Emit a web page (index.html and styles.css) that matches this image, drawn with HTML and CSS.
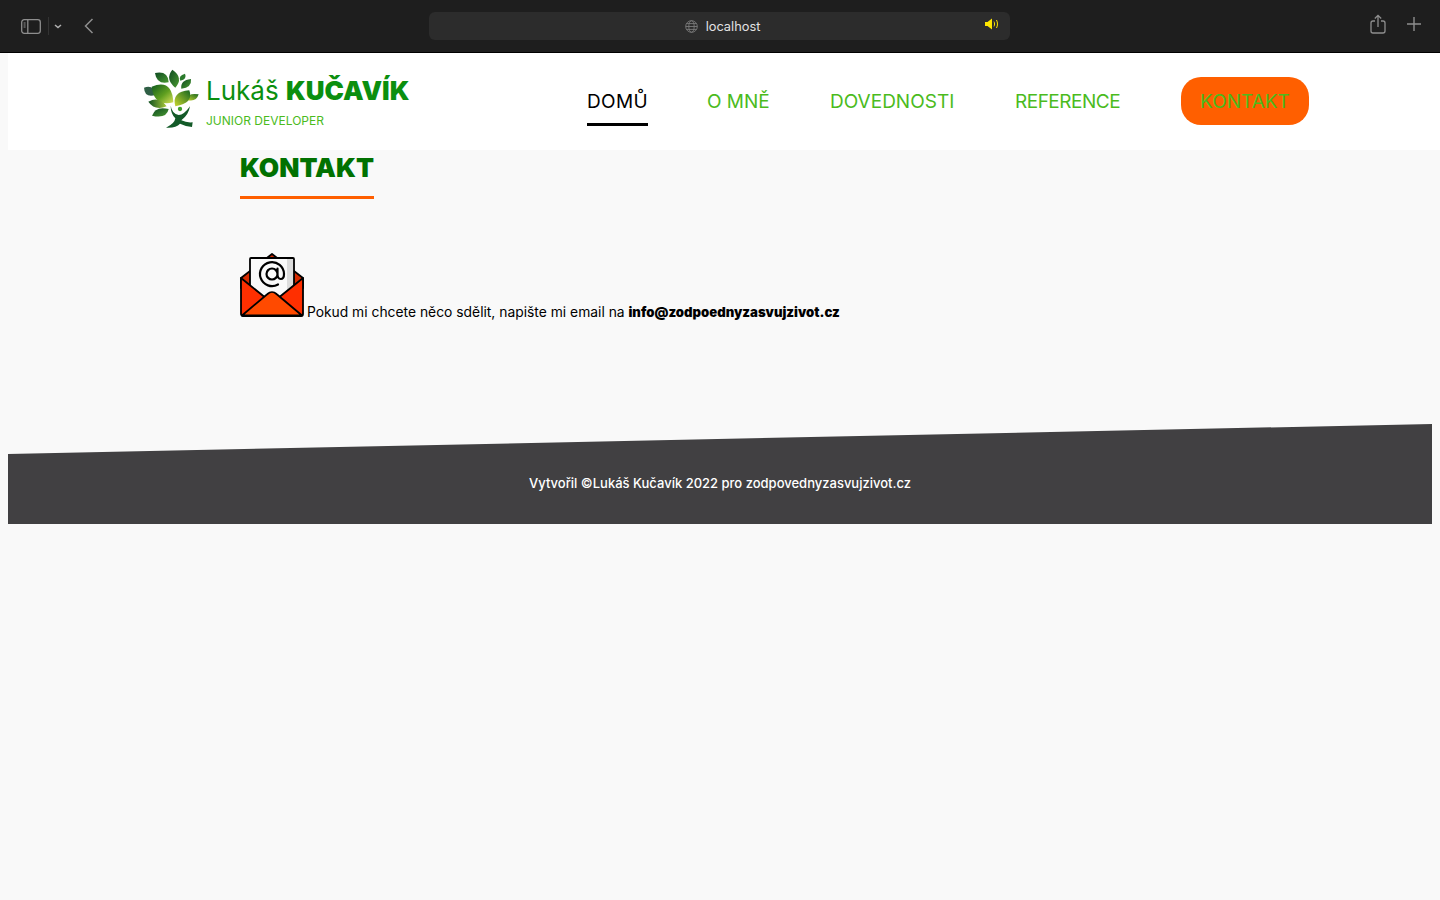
FILE: index.html
```html
<!DOCTYPE html>
<html lang="cs">
  <head>
    <meta charset="utf-8">
    <title>Kontakt</title>
    <link rel="stylesheet" href="styles.css">
  </head>
  <body>
    <div class="browser-bar">
      <div class="bar-left">
        <svg class="ico-sidebar" width="20" height="15" viewBox="0 0 20 15" fill="none" stroke="#8e8e8e" stroke-width="1.3">
          <rect x="0.7" y="0.7" width="18.6" height="13.6" rx="2.5"/>
          <path d="M6.8 0.7v13.6"/>
          <path d="M2.6 4h2M2.6 6h2M2.6 8h2" stroke-width="1"/>
        </svg>
        <span class="bar-sep"></span>
        <svg class="ico-chev" width="8" height="5" viewBox="0 0 8 5" fill="none" stroke="#b0b0b0" stroke-width="1.5"><path d="M1 1l3 2.6L7 1"/></svg>
        <svg class="ico-back" width="10" height="16" viewBox="0 0 10 16" fill="none" stroke="#8e8e8e" stroke-width="1.5"><path d="M8.5 1L1.5 8l7 7"/></svg>
      </div>
      <div class="address">
        <svg class="ico-globe" width="13" height="13" viewBox="0 0 13 13" fill="none" stroke="#7b7b7b" stroke-width="0.9">
          <circle cx="6.5" cy="6.5" r="5.8"/>
          <ellipse cx="6.5" cy="6.5" rx="2.7" ry="5.8"/>
          <path d="M0.7 6.5h11.6M1.5 3.6h10M1.5 9.4h10"/>
        </svg>
        <span class="address-text">localhost</span>
        <svg class="ico-sound" width="14" height="12" viewBox="0 0 14 12" fill="none">
          <path d="M0 4h2.5L7 .6v10.8L2.5 8H0z" fill="#ffe600"/>
          <path d="M9 3.6c.8 1.400.8 3.400 0 4.800M11.500 2c1.300 2.500 1.300 5.500 0 8" stroke="#ffe600" stroke-width="1"/>
        </svg>
      </div>
      <div class="bar-right">
        <svg width="16" height="20" viewBox="0 0 16 20" fill="none" stroke="#8e8e8e" stroke-width="1.3">
          <path d="M5 7H3a2 2 0 0 0-2 2v8a2 2 0 0 0 2 2h10a2 2 0 0 0 2-2V9a2 2 0 0 0-2-2h-2"/>
          <path d="M8 13V1.500M4.800 4.500L8 1.300l3.200 3.200"/>
        </svg>
        <svg width="14" height="14" viewBox="0 0 14 14" fill="none" stroke="#8e8e8e" stroke-width="1.4"><path d="M7 0v14M0 7h14"/></svg>
      </div>
    </div>

    <div class="page">
      <header class="site-header">
        <a class="logo" href="#">
          <svg class="logo-mark" width="58" height="62" viewBox="9 12 174 186">
            <defs>
              <linearGradient id="leafBig" x1="0" y1="0" x2="1" y2="1">
                <stop offset="0" stop-color="#0f5a1e"/>
                <stop offset="0.55" stop-color="#5f9f20"/>
                <stop offset="1" stop-color="#d8e05a"/>
              </linearGradient>
              <linearGradient id="leafRight" x1="1" y1="0" x2="0" y2="1">
                <stop offset="0" stop-color="#14651f"/>
                <stop offset="1" stop-color="#c8d62e"/>
              </linearGradient>
              <linearGradient id="leafDark" x1="0" y1="0" x2="1" y2="1">
                <stop offset="0" stop-color="#0e4a22"/>
                <stop offset="1" stop-color="#4a9a30"/>
              </linearGradient>
              <linearGradient id="leafFade" x1="0" y1="0" x2="1" y2="0">
                <stop offset="0" stop-color="#0e4f20"/>
                <stop offset="1" stop-color="#a9c93a"/>
              </linearGradient>
            </defs>
            <path d="M12 68Q42 58 47 90Q14 100 12 68z" fill="#2f5f45"/>
            <path d="M45 24Q84 16 86 52Q50 60 45 24z" fill="url(#leafDark)"/>
            <path d="M97 14Q132 38 106 68Q74 42 97 14z" fill="url(#leafDark)"/>
            <path d="M135 26Q142 42 121 47Q114 32 135 26z" fill="#2a7a2c"/>
            <path d="M153 42Q156 68 124 71Q120 46 153 42z" fill="url(#leafDark)"/>
            <path d="M176 88Q168 114 138 104Q144 82 176 88z" fill="url(#leafRight)"/>
            <path d="M35 65Q96 40 100 112Q42 126 35 65z" fill="url(#leafBig)"/>
            <path d="M148 76Q162 114 106 124Q94 80 148 76z" fill="url(#leafRight)"/>
            <path d="M25 110Q58 92 80 124Q44 138 25 110z" fill="url(#leafFade)"/>
            <path d="M36 152Q46 122 86 132Q80 162 36 152z" fill="url(#leafDark)"/>
            <circle cx="120" cy="132" r="6.500" fill="#3f9f2c"/>
            <path d="M92 122Q96 146 116 150Q132 150 150 124Q146 150 124 166Q140 174 158 172L156 186Q136 184 120 176Q108 190 78 188Q104 176 106 160Q92 146 92 122z" fill="#135a28"/>
          </svg>
          <span class="logo-text">
            <span class="logo-name">Lukáš <b>KUČAVÍK</b></span>
            <span class="logo-sub">JUNIOR DEVELOPER</span>
          </span>
        </a>
        <nav class="main-nav">
          <a class="nav-link active" href="#">DOMŮ</a>
          <a class="nav-link" href="#">O MNĚ</a>
          <a class="nav-link" href="#">DOVEDNOSTI</a>
          <a class="nav-link nav-tight" href="#">REFERENCE</a>
          <a class="nav-link nav-cta" href="#">KONTAKT</a>
        </nav>
      </header>

      <main class="content">
        <h1 class="page-title">KONTAKT</h1>
        <p class="contact-line">
          <svg class="mail-ico" width="64" height="64" viewBox="0 0 64 64">
            <path d="M1 25L32 1l31 24v10H1z" fill="#d62a00" stroke="#000" stroke-width="1.800" stroke-linejoin="round"/>
            <path d="M11 5h42a1 1 0 0 1 1 1v40H10V6a1 1 0 0 1 1-1z" fill="#fafafa" stroke="#000" stroke-width="1.800"/>
            <path d="M47 6h6v34h-6z" fill="#dcdcdc"/>
            <path d="M38 31.500A12 12 0 1 1 44 21c0 3-1.400 5-3.300 5s-3.200-2-3.200-4.500v-6m0 5.500a5.500 5.500 0 1 1-11 0 5.500 5.500 0 0 1 11 0z" fill="none" stroke="#000" stroke-width="2.200" stroke-linecap="round"/>
            <path d="M1 25l31 25 31-25v36a2 2 0 0 1-2 2H3a2 2 0 0 1-2-2z" fill="#ff2f00" stroke="#000" stroke-width="1.800" stroke-linejoin="round"/>
            <path d="M2 62.500L27.500 41c2.700-2.500 6.300-2.500 9 0L62 62.500z" fill="#ff4a00" stroke="#000" stroke-width="1.800" stroke-linejoin="round"/>
          </svg>
          Pokud mi chcete něco sdělit, napište mi email na <strong>info@zodpoednyzasvujzivot.cz</strong>
        </p>
      </main>

      <footer class="site-footer">
        <p>Vytvořil ©Lukáš Kučavík 2022 pro zodpovednyzasvujzivot.cz</p>
      </footer>
    </div>
  </body>
</html>
```

FILE: styles.css
```css
* {
  box-sizing: border-box;
}

body {
  margin: 0;
  background-color: #f9f9f9;
  font-family: "Inter", "Liberation Sans", sans-serif;
  color: #000;
}

a {
  text-decoration: none;
}

/* browser chrome */
.browser-bar {
  height: 53px;
  background-color: #1e1e1e;
  border-bottom: 1px solid #000;
  display: flex;
  align-items: center;
  position: relative;
}

.bar-left {
  display: flex;
  align-items: center;
  padding-left: 21px;
  width: 429px;
}

.bar-sep {
  width: 1px;
  height: 18px;
  background-color: #333;
  margin-left: 7px;
}

.ico-chev {
  margin-left: 5px;
}

.ico-back {
  margin-left: 22px;
}

.address {
  width: 581px;
  height: 28px;
  background-color: #2c2c2c;
  border-radius: 6px;
  display: flex;
  align-items: center;
  justify-content: center;
  position: relative;
  padding-left: 6px;
  color: #e2e2e2;
  font-size: 12.800px;
}

.ico-globe {
  margin-right: 8px;
}

.ico-sound {
  position: absolute;
  right: 11px;
  top: 6px;
}

.bar-right {
  flex: 1;
  display: flex;
  align-items: center;
  justify-content: flex-end;
  gap: 21px;
  padding-right: 19px;
  margin-top: -4px;
}

/* site */
.page {
  padding: 0 8px;
}

.site-header {
  height: 97px;
  margin-right: -8px;
  background-color: #fff;
  display: flex;
  align-items: center;
  padding-left: 135px;
  padding-right: 131px;
  justify-content: space-between;
}

.logo {
  display: flex;
  align-items: center;
  gap: 5px;
}

.logo-mark {
  margin-top: -3px;
}

.logo-text {
  display: flex;
  flex-direction: column;
  margin-top: 2px;
}

.logo-name {
  font-size: 26px;
  line-height: 32px;
  color: #0b8f0f;
  white-space: nowrap;
}

.logo-name b {
  font-weight: 900;
}

.logo-sub {
  font-size: 12px;
  line-height: 18px;
  color: #4bbb1d;
  margin-top: 5px;
}

.main-nav {
  display: grid;
  grid-template-columns: 60px 63px 125px 106px 128px;
  column-gap: 60px;
  align-items: start;
}

.nav-link {
  font-size: 19px;
  line-height: 30px;
  height: 49px;
  padding-top: 10px;
  border-bottom: 3px solid transparent;
  color: #4bbb1d;
  white-space: nowrap;
}

.nav-link.active {
  width: 61px;
  color: #000;
  border-bottom-color: #000;
  letter-spacing: 0.4px;
}

.nav-tight {
  letter-spacing: -0.5px;
}

.nav-cta {
  height: 48px;
  background-color: #ff5f00;
  border: 0;
  border-radius: 20px;
  text-align: center;
}

.content {
  padding: 0 232px;
  height: 274px;
}

.page-title {
  display: inline-block;
  margin: 0;
  font-size: 26.300px;
  line-height: 35px;
  font-weight: 900;
  color: #017101;
  padding-bottom: 11px;
  border-bottom: 3px solid #ff5f00;
}

.contact-line {
  margin: 54px 0 0;
  font-size: 13.850px;
  line-height: 21px;
}

.contact-line strong {
  font-size: 13.150px;
  font-weight: 900;
}

.mail-ico {
  vertical-align: baseline;
  margin-right: -1px;
}

.site-footer {
  height: 100px;
  background-color: #414042;
  clip-path: polygon(0 30px, 100% 0, 100% 100%, 0 100%);
  display: flex;
  align-items: flex-end;
  justify-content: center;
}

.site-footer p {
  margin: 0 0 31px;
  color: #fff;
  font-size: 13px;
  line-height: 20px;
  font-weight: 500;
}
```
